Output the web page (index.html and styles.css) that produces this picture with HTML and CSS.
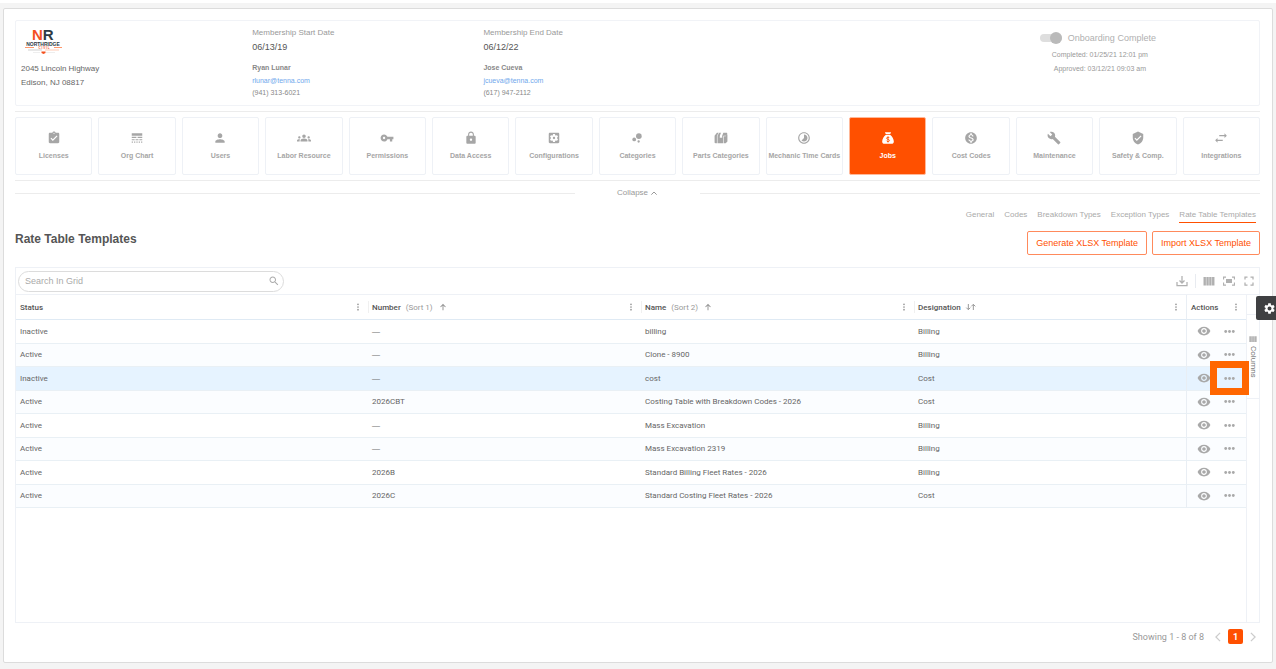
FILE: index.html
```html
<!DOCTYPE html>
<html lang="en">
<head>
    <meta charset="UTF-8">
    <meta name="viewport" content="width=device-width, initial-scale=1.0">
    <title>Rate Table Templates</title>
    <link rel="stylesheet" href="styles.css">
</head>
<body>
    <!-- shared icons -->
    <svg class="sprite" aria-hidden="true">
        <symbol id="eye" viewBox="0 0 24 24"><path d="M12 4.500C7 4.500 2.730 7.610 1 12c1.730 4.390 6 7.500 11 7.500s9.270-3.110 11-7.500c-1.730-4.390-6-7.500-11-7.500zM12 17c-2.760 0-5-2.240-5-5s2.240-5 5-5 5 2.240 5 5-2.240 5-5 5zm0-8c-1.660 0-3 1.340-3 3s1.340 3 3 3 3-1.340 3-3-1.340-3-3-3z"/></symbol>
        <symbol id="dots" viewBox="0 0 24 24"><circle cx="5" cy="12" r="2.600"/><circle cx="12" cy="12" r="2.600"/><circle cx="19" cy="12" r="2.600"/></symbol>
        <symbol id="kebab" viewBox="0 0 24 24"><circle cx="12" cy="4" r="2.600"/><circle cx="12" cy="12" r="2.600"/><circle cx="12" cy="20" r="2.600"/></symbol>
        <symbol id="up" viewBox="0 0 24 24"><path d="M10.500 22V8l-5 5-2-2L12 2.500l8.500 8.500-2 2-5-5v14z"/></symbol>
        <symbol id="columns" viewBox="0 0 24 24"><path d="M1 4h4.800v17H1zM6.700 4h4.800v17H6.700zM12.400 4h4.800v17h-4.800zM18.100 4h4.800v17h-4.800z"/></symbol>
    </svg>

    <div class="page">
        <main class="panel">
            <section class="info">
                <div>
                    <svg class="logo" viewBox="0 0 45 29" role="img" aria-label="Northridge Civil">
                        <text x="11" y="13" class="logo-big"><tspan class="logo-n">N</tspan><tspan class="logo-r">R</tspan></text>
                        <text x="22" y="19" text-anchor="middle" class="logo-name">NORTHRIDGE</text>
                        <path d="M4 20.500h9M33 20.500h8" stroke="#ff6a2b" stroke-width=".7"/>
                        <text x="23" y="22" text-anchor="middle" class="logo-sub">C I V I L</text>
                        <path d="M7 23h14" stroke="#bbb" stroke-width=".7"/>
                        <path d="M24 23h14" stroke="#ffb596" stroke-width=".7"/>
                        <path d="M12 25.500h7M25 25.500h9" stroke="#ddd" stroke-width=".5"/>
                        <path d="M20.500 24.500h4v1.500l-2 1-2-1z" fill="#f4511e"/>
                    </svg>
                    <address>2045 Lincoln Highway<br>Edison, NJ 08817</address>
                </div>
                <div class="member">
                    <span class="label">Membership Start Date</span>
                    <span class="date">06/13/19</span>
                    <strong>Ryan Lunar</strong>
                    <a href="#">rlunar@tenna.com</a>
                    <span>(941) 313-6021</span>
                </div>
                <div class="member">
                    <span class="label">Membership End Date</span>
                    <span class="date">06/12/22</span>
                    <strong>Jose Cueva</strong>
                    <a href="#">jcueva@tenna.com</a>
                    <span>(617) 947-2112</span>
                </div>
                <div class="onboarding">
                    <label class="toggle"><input type="checkbox" checked disabled>Onboarding Complete</label>
                    <span>Completed: 01/25/21 12:01 pm</span>
                    <span>Approved: 03/12/21 09:03 am</span>
                </div>
            </section>

            <nav class="tiles">
                <button><svg viewBox="0 0 24 24"><path d="M19 3h-4.180C14.400 1.840 13.300 1 12 1c-1.300 0-2.400.840-2.820 2H5c-1.100 0-2 .900-2 2v14c0 1.100.900 2 2 2h14c1.100 0 2-.900 2-2V5c0-1.100-.900-2-2-2zm-7 0c.550 0 1 .450 1 1s-.450 1-1 1-1-.450-1-1 .450-1 1-1zm-2 14l-4-4 1.410-1.410L10 14.170l6.590-6.590L18 9l-8 8z"/></svg>Licenses</button>
                <button><svg viewBox="0 0 24 24"><path d="M3 16h5v-2H3v2zm6.500 0h5v-2h-5v2zm6.500 0h5v-2h-5v2zM3 20h2v-2H3v2zm4 0h2v-2H7v2zm4 0h2v-2h-2v2zm4 0h2v-2h-2v2zm4 0h2v-2h-2v2zM3 12h8v-2H3v2zm10 0h8v-2h-8v2zM3 4v4h18V4H3z"/></svg>Org Chart</button>
                <button><svg viewBox="0 0 24 24"><path d="M12 12c2.210 0 4-1.790 4-4s-1.790-4-4-4-4 1.790-4 4 1.790 4 4 4zm0 2c-2.670 0-8 1.340-8 4v2h16v-2c0-2.660-5.330-4-8-4z"/></svg>Users</button>
                <button><svg viewBox="0 0 24 24"><path d="M12 12.750c1.630 0 3.070.390 4.240.900 1.080.480 1.760 1.560 1.760 2.730V18H6v-1.610c0-1.180.680-2.260 1.760-2.730 1.170-.520 2.610-.910 4.240-.910zM4 13c1.100 0 2-.900 2-2s-.900-2-2-2-2 .900-2 2 .900 2 2 2zm1.130 1.100c-.370-.060-.740-.100-1.130-.100-.990 0-1.930.210-2.780.580C.480 14.900 0 15.620 0 16.430V18h4.500v-1.610c0-.830.230-1.610.630-2.290zM20 13c1.100 0 2-.900 2-2s-.900-2-2-2-2 .900-2 2 .900 2 2 2zm4 3.430c0-.810-.480-1.530-1.220-1.850-.850-.370-1.790-.580-2.780-.580-.390 0-.760.040-1.130.100.400.680.630 1.460.630 2.290V18H24v-1.570zM12 6c1.660 0 3 1.340 3 3s-1.340 3-3 3-3-1.340-3-3 1.340-3 3-3z"/></svg>Labor Resource</button>
                <button><svg viewBox="0 0 24 24"><path d="M12.650 10C11.830 7.670 9.610 6 7 6c-3.310 0-6 2.690-6 6s2.690 6 6 6c2.610 0 4.830-1.670 5.650-4H17v4h4v-4h2v-4H12.650zM7 14c-1.100 0-2-.900-2-2s.900-2 2-2 2 .900 2 2-.900 2-2 2z"/></svg>Permissions</button>
                <button><svg viewBox="0 0 24 24"><path d="M18 8h-1V6c0-2.760-2.240-5-5-5S7 3.240 7 6v2H6c-1.100 0-2 .900-2 2v10c0 1.100.900 2 2 2h12c1.100 0 2-.900 2-2V10c0-1.100-.900-2-2-2zm-6 9c-1.100 0-2-.900-2-2s.900-2 2-2 2 .900 2 2-.900 2-2 2zm3.100-9H8.900V6c0-1.710 1.390-3.100 3.100-3.100 1.710 0 3.100 1.390 3.100 3.100v2z"/></svg>Data Access</button>
                <button><svg viewBox="0 0 24 24"><path d="M12 10c-1.100 0-2 .900-2 2s.900 2 2 2 2-.900 2-2-.900-2-2-2zm7-7H5c-1.110 0-2 .900-2 2v14c0 1.100.890 2 2 2h14c1.110 0 2-.900 2-2V5c0-1.100-.890-2-2-2zm-1.750 9c0 .230-.020.460-.050.680l1.480 1.160c.130.110.170.300.080.450l-1.400 2.420c-.090.150-.270.210-.430.150l-1.740-.700c-.360.280-.760.510-1.180.690l-.260 1.850c-.030.170-.180.300-.350.300h-2.800c-.170 0-.320-.130-.350-.290l-.260-1.850c-.430-.180-.820-.410-1.180-.690l-1.740.700c-.160.060-.340 0-.430-.150l-1.400-2.420c-.090-.150-.050-.340.080-.450l1.480-1.160c-.030-.230-.050-.460-.050-.690 0-.230.020-.460.050-.680l-1.480-1.160c-.130-.110-.170-.300-.080-.450l1.400-2.420c.090-.150.270-.210.430-.150l1.740.700c.360-.280.760-.510 1.180-.690l.260-1.850c.030-.170.180-.300.350-.300h2.800c.170 0 .320.130.350.290l.260 1.850c.430.180.820.410 1.180.690l1.740-.700c.160-.060.340 0 .430.150l1.400 2.420c.090.150.050.340-.080.450l-1.480 1.160c.030.230.050.460.050.690z"/></svg>Configurations</button>
                <button><svg viewBox="0 0 24 24"><circle cx="7.200" cy="14.400" r="3.200"/><circle cx="14.800" cy="18" r="2"/><circle cx="15.200" cy="8.800" r="4.800"/></svg>Categories</button>
                <button><svg viewBox="0 0 24 24"><path d="M1 8l4-5h3L5 8v13H2.500L1 20zM6 8l3-5h3l-2 5v4l2-1 2 1V8l2-5h6l1 2-2 3H16v13H6zM17 9h3l3-3v12l-3 3h-3z"/></svg>Parts Categories</button>
                <button><svg viewBox="0 0 24 24"><path d="M16.240 7.760C15.070 6.590 13.540 6 12 6v6l-4.240 4.240c2.340 2.340 6.140 2.340 8.490 0 2.340-2.340 2.340-6.140-.010-8.480zM12 2C6.480 2 2 6.480 2 12s4.480 10 10 10 10-4.480 10-10S17.520 2 12 2zm0 18c-4.420 0-8-3.580-8-8s3.580-8 8-8 8 3.580 8 8-3.580 8-8 8z"/></svg>Mechanic Time Cards</button>
                <button class="active"><svg viewBox="0 0 24 24"><path d="M7 2h10v2l-2 1H9L7 4zM8.500 6.500h7C19 9 22 14 22 18c0 3-1.500 4-4 4H6c-2.500 0-4-1-4-4 0-4 3-9 6.500-11.500z"/><path d="M14.500 12c-.500-1-1.400-1.300-2.500-1.300-3.300 0-3.300 3.200 0 3.600 3.500.500 3.300 3.800 0 3.800-1.300 0-2.200-.500-2.600-1.500M12 9.300v10.400" fill="none" stroke="#ff5000" stroke-width="1.500"/></svg>Jobs</button>
                <button><svg viewBox="0 0 24 24"><path d="M12 2C6.480 2 2 6.480 2 12s4.480 10 10 10 10-4.480 10-10S17.520 2 12 2zm1.410 16.090V20h-2.670v-1.930c-1.710-.360-3.160-1.460-3.270-3.400h1.960c.100 1.050.820 1.870 2.650 1.870 1.960 0 2.400-.980 2.400-1.590 0-.830-.440-1.610-2.670-2.140-2.480-.600-4.180-1.620-4.180-3.670 0-1.720 1.390-2.840 3.110-3.210V4h2.670v1.950c1.860.450 2.790 1.860 2.850 3.390H14.300c-.050-1.110-.640-1.870-2.220-1.870-1.500 0-2.400.680-2.400 1.640 0 .840.650 1.390 2.670 1.910s4.180 1.390 4.180 3.910c-.010 1.830-1.380 2.830-3.120 3.160z"/></svg>Cost Codes</button>
                <button><svg viewBox="0 0 24 24"><path d="M22.700 19l-9.100-9.100c.900-2.300.400-5-1.500-6.900-2-2-5-2.400-7.400-1.300L9 6 6 9 1.600 4.700C.400 7.100.900 10.100 2.900 12.100c1.900 1.900 4.600 2.400 6.900 1.500l9.100 9.100c.400.400 1 .400 1.400 0l2.300-2.300c.500-.400.500-1.100.100-1.400z"/></svg>Maintenance</button>
                <button><svg viewBox="0 0 24 24"><path d="M12 1L3 5v6c0 5.550 3.840 10.740 9 12 5.160-1.260 9-6.450 9-12V5l-9-4zm-2 16l-4-4 1.410-1.410L10 14.170l6.590-6.590L18 9l-8 8z"/></svg>Safety &amp; Comp.</button>
                <button><svg viewBox="0 0 24 24"><path d="M22 8l-4-4v3H9v2h9v3l4-4zM2 16l4 4v-3h9v-2H6v-3l-4 4z"/></svg>Integrations</button>
            </nav>

            <div class="collapse">
                <button>Collapse <svg viewBox="0 0 24 24"><path d="M4 17l8-8 8 8" fill="none" stroke="currentColor" stroke-width="3"/></svg></button>
            </div>

            <nav class="tabs">
                <a href="#">General</a>
                <a href="#">Codes</a>
                <a href="#">Breakdown Types</a>
                <a href="#">Exception Types</a>
                <a href="#" class="current">Rate Table Templates</a>
            </nav>

            <div class="heading">
                <h1>Rate Table Templates</h1>
                <button>Generate XLSX Template</button>
                <button>Import XLSX Template</button>
            </div>

            <section class="grid">
                <div class="toolbar">
                    <div class="search">
                        <input type="text" placeholder="Search In Grid" aria-label="Search In Grid">
                        <svg viewBox="0 0 24 24"><path d="M15.500 14h-.790l-.280-.270C15.410 12.590 16 11.110 16 9.500 16 5.910 13.090 3 9.500 3S3 5.910 3 9.500 5.910 16 9.500 16c1.610 0 3.090-.590 4.230-1.570l.270.280v.790l5 4.990L20.490 19l-4.990-5zm-6 0C7.010 14 5 11.990 5 9.500S7.010 5 9.500 5 14 7.010 14 9.500 11.990 14 9.500 14z"/></svg>
                    </div>
                    <div class="tools">
                        <button aria-label="Download"><svg viewBox="0 0 24 24"><path d="M2 14v7h20v-7M12 2v14M7 11l5 5 5-5" fill="none" stroke="currentColor" stroke-width="2.500"/></svg></button>
                        <span class="divider"></span>
                        <button aria-label="Columns"><svg><use href="#columns"/></svg></button>
                        <button aria-label="Fit width"><svg viewBox="0 0 24 24"><path d="M6 8h12v8H6z"/><path d="M1 9V4h5M18 4h5v5M23 15v5h-5M6 20H1v-5" fill="none" stroke="currentColor" stroke-width="2.500"/></svg></button>
                        <button aria-label="Full screen"><svg viewBox="0 0 24 24"><path d="M4 9V4h5M15 4h5v5M20 15v5h-5M9 20H4v-5" fill="none" stroke="currentColor" stroke-width="2.500"/></svg></button>
                    </div>
                </div>
                <div class="grid-body">
                    <div class="table-wrap">
                        <table>
                            <colgroup>
                                <col class="col-status">
                                <col class="col-data">
                                <col class="col-data">
                                <col>
                                <col class="col-actions">
                            </colgroup>
                            <thead>
                                <tr>
                                    <th><div><b>Status</b><svg class="menu"><use href="#kebab"/></svg></div></th>
                                    <th><div><b>Number</b><i>(Sort 1)</i><svg><use href="#up"/></svg><svg class="menu"><use href="#kebab"/></svg></div></th>
                                    <th><div><b>Name</b><i>(Sort 2)</i><svg><use href="#up"/></svg><svg class="menu"><use href="#kebab"/></svg></div></th>
                                    <th><div><b>Designation</b><svg class="both" viewBox="0 0 36 24"><path d="M10 3v17M4 14l6 6 6-6M25 21V4M19 10l6-6 6 6" fill="none" stroke="currentColor" stroke-width="3"/></svg><svg class="menu"><use href="#kebab"/></svg></div></th>
                                    <th><div><b>Actions</b><svg class="menu"><use href="#kebab"/></svg></div></th>
                                </tr>
                            </thead>
                            <tbody>
                                <tr>
                                    <td>Inactive</td><td class="empty">—</td><td>billing</td><td>Billing</td>
                                    <td class="actions"><button aria-label="View"><svg><use href="#eye"/></svg></button><button aria-label="More"><svg><use href="#dots"/></svg></button></td>
                                </tr>
                                <tr>
                                    <td>Active</td><td class="empty">—</td><td>Clone - 8900</td><td>Billing</td>
                                    <td class="actions"><button aria-label="View"><svg><use href="#eye"/></svg></button><button aria-label="More"><svg><use href="#dots"/></svg></button></td>
                                </tr>
                                <tr class="selected">
                                    <td>Inactive</td><td class="empty">—</td><td>cost</td><td>Cost</td>
                                    <td class="actions"><button aria-label="View"><svg><use href="#eye"/></svg></button><button aria-label="More"><svg><use href="#dots"/></svg></button><span class="marker"></span></td>
                                </tr>
                                <tr>
                                    <td>Active</td><td>2026CBT</td><td>Costing Table with Breakdown Codes - 2026</td><td>Cost</td>
                                    <td class="actions"><button aria-label="View"><svg><use href="#eye"/></svg></button><button aria-label="More"><svg><use href="#dots"/></svg></button></td>
                                </tr>
                                <tr>
                                    <td>Active</td><td class="empty">—</td><td>Mass Excavation</td><td>Billing</td>
                                    <td class="actions"><button aria-label="View"><svg><use href="#eye"/></svg></button><button aria-label="More"><svg><use href="#dots"/></svg></button></td>
                                </tr>
                                <tr>
                                    <td>Active</td><td class="empty">—</td><td>Mass Excavation 2319</td><td>Billing</td>
                                    <td class="actions"><button aria-label="View"><svg><use href="#eye"/></svg></button><button aria-label="More"><svg><use href="#dots"/></svg></button></td>
                                </tr>
                                <tr>
                                    <td>Active</td><td>2026B</td><td>Standard Billing Fleet Rates - 2026</td><td>Billing</td>
                                    <td class="actions"><button aria-label="View"><svg><use href="#eye"/></svg></button><button aria-label="More"><svg><use href="#dots"/></svg></button></td>
                                </tr>
                                <tr>
                                    <td>Active</td><td>2026C</td><td>Standard Costing Fleet Rates - 2026</td><td>Cost</td>
                                    <td class="actions"><button aria-label="View"><svg><use href="#eye"/></svg></button><button aria-label="More"><svg><use href="#dots"/></svg></button></td>
                                </tr>
                            </tbody>
                        </table>
                    </div>
                    <aside>
                        <button><svg><use href="#columns"/></svg>Columns</button>
                    </aside>
                </div>
            </section>

            <footer class="pager">
                <span>Showing 1 - 8 of 8</span>
                <button aria-label="Previous"><svg viewBox="0 0 24 24"><path d="M17 2L7 12l10 10" fill="none" stroke="currentColor" stroke-width="3"/></svg></button>
                <button class="page-no">1</button>
                <button aria-label="Next"><svg viewBox="0 0 24 24"><path d="M7 2l10 10L7 22" fill="none" stroke="currentColor" stroke-width="3"/></svg></button>
            </footer>
        </main>
    </div>

    <button class="settings" aria-label="Settings">
        <svg viewBox="0 0 24 24"><path d="M19.140 12.940c.040-.300.060-.610.060-.940 0-.320-.020-.640-.070-.940l2.030-1.580c.180-.140.230-.410.120-.610l-1.920-3.320c-.120-.220-.370-.290-.590-.220l-2.390.960c-.500-.380-1.030-.700-1.620-.940l-.360-2.540c-.040-.240-.240-.410-.480-.410h-3.840c-.240 0-.430.170-.470.410l-.360 2.540c-.590.240-1.130.570-1.620.940l-2.390-.960c-.220-.080-.470 0-.590.220L2.740 8.870c-.120.210-.080.470.120.610l2.030 1.580c-.050.300-.090.630-.090.940s.020.640.070.940l-2.030 1.580c-.180.140-.230.410-.120.610l1.920 3.320c.120.220.370.290.590.220l2.390-.960c.500.380 1.030.700 1.620.940l.360 2.540c.050.240.240.410.480.410h3.840c.240 0 .440-.170.470-.410l.360-2.540c.590-.240 1.130-.560 1.620-.940l2.390.960c.220.080.470 0 .590-.220l1.920-3.320c.120-.220.070-.470-.120-.610l-2.010-1.580zM12 15.600c-1.980 0-3.600-1.620-3.600-3.600s1.620-3.600 3.600-3.600 3.600 1.620 3.600 3.600-1.620 3.600-3.600 3.600z"/></svg>
    </button>
</body>
</html>
```
FILE: styles.css
```css
* {
    box-sizing: border-box;
}
body {
    margin: 0;
    background: #f4f4f4;
    font-family: Arial, "Liberation Sans", sans-serif;
    font-size: 8px;
    color: #666;
}
button {
    margin: 0;
    padding: 0;
    border: none;
    background: none;
    font: inherit;
    color: inherit;
    cursor: pointer;
}
svg {
    display: block;
    fill: currentColor;
    flex: none;
}
.sprite {
    position: absolute;
    width: 0;
    height: 0;
}
.page {
    display: flex;
    min-height: 100vh;
    border-top: 3px solid white;
    padding: 5px 3px 6px;
}
.panel {
    flex: 1;
    display: flex;
    flex-direction: column;
    min-width: 0;
    padding: 11px 12px 18px 11px;
    background: white;
    border: 1px solid #dcdcdc;
    border-radius: 2px;
}

/* company info */
.info {
    display: grid;
    grid-template-columns: 3fr 3fr 6fr 4fr;
    padding: 6px 5px;
    min-height: 85px;
    border: 1px solid #f1f3f7;
    border-radius: 2px;
}
.logo {
    width: 45px;
    height: 29px;
}
.logo-big {
    font-size: 15px;
    font-weight: bold;
}
.logo-n {
    fill: #f4511e;
}
.logo-r {
    fill: #2f3a45;
}
.logo-name {
    font-size: 5px;
    font-weight: bold;
    fill: #2f3a45;
}
.logo-sub {
    font-size: 3px;
    font-weight: bold;
    fill: #f4511e;
}
address {
    margin-top: 6px;
    font-style: normal;
    line-height: 14px;
}
.member {
    display: flex;
    flex-direction: column;
    align-items: flex-start;
    font-size: 7px;
    line-height: 12px;
    color: #888;
}
.member .label {
    font-size: 8px;
    color: #999;
}
.member .date {
    margin: 1px 0 8px;
    font-size: 9px;
    line-height: 14px;
    color: #555;
}
.member a {
    color: #6fa8ec;
    text-decoration: none;
    line-height: 13px;
}
.onboarding {
    display: flex;
    flex-direction: column;
    align-items: center;
    padding-top: 4px;
    font-size: 7px;
    line-height: 14px;
    color: #999;
}
.toggle {
    display: flex;
    align-items: center;
    gap: 6px;
    margin: 0 4px 3px 0;
    font-size: 9px;
    color: #b0b0b0;
}
.toggle input {
    appearance: none;
    display: flex;
    justify-content: flex-end;
    align-items: center;
    width: 22px;
    height: 8px;
    margin: 0;
    border-radius: 4px;
    background: #dedede;
}
.toggle input::before {
    content: "";
    width: 12px;
    height: 12px;
    flex: none;
    border-radius: 50%;
    background: #bababa;
}

/* section tiles */
.tiles {
    display: grid;
    grid-template-columns: repeat(15, 1fr);
    gap: 6px;
    margin-top: 5px;
    padding: 5px 0;
    border-top: 1px solid #ececec;
    border-bottom: 1px solid #ececec;
}
.tiles button {
    display: flex;
    flex-direction: column;
    align-items: center;
    justify-content: center;
    gap: 6px;
    min-width: 0;
    height: 58px;
    border: 1px solid #eef1f6;
    border-radius: 2px;
    font-size: 7px;
    font-weight: bold;
    line-height: 10px;
    white-space: nowrap;
    color: #a6a6a6;
}
.tiles svg {
    width: 14px;
    height: 14px;
}
.tiles .active {
    background: #ff5000;
    border-color: #ffb899;
    color: white;
}
.collapse {
    display: flex;
    align-items: center;
    margin-top: 5px;
    line-height: 14px;
    color: #999;
}
.collapse::before,
.collapse::after {
    content: "";
    flex: 1;
    border-top: 1px solid #ececec;
}
.collapse button {
    display: flex;
    align-items: center;
    justify-content: center;
    gap: 2px;
    width: 125px;
}
.collapse svg {
    width: 8px;
    height: 8px;
}

/* tabs and heading */
.tabs {
    display: flex;
    justify-content: flex-end;
    gap: 10px;
    margin: 8px 4px 0 0;
    line-height: 14px;
}
.tabs a {
    color: #aaa;
    text-decoration: none;
    border-bottom: 1px solid transparent;
}
.tabs .current {
    border-color: #ff5000;
}
.heading {
    display: flex;
    gap: 5px;
    margin: 8px 0 12px;
}
h1 {
    flex: 1;
    margin: 0;
    font-size: 12px;
    line-height: 16px;
    color: #555;
}
.heading button {
    height: 24px;
    padding: 0 8px;
    border: 1px solid #ff8a5c;
    border-radius: 2px;
    font-size: 9px;
    color: #ff5000;
}

/* data grid */
.grid {
    flex: 1;
    display: flex;
    flex-direction: column;
    border: 1px solid #eef1f6;
    font-family: Roboto, sans-serif;
}
.toolbar {
    display: flex;
    justify-content: space-between;
    align-items: center;
    height: 27px;
    padding: 0 4px 0 2px;
    border-bottom: 1px solid #eef1f6;
}
.search {
    display: flex;
    align-items: center;
    width: 266px;
    height: 21px;
    padding: 0 3px 0 6px;
    border: 1px solid #dcdcdc;
    border-radius: 11px;
    color: #aaa;
}
.search input {
    flex: 1;
    min-width: 0;
    padding: 0;
    border: none;
    outline: none;
    background: none;
    font-family: Arial, "Liberation Sans", sans-serif;
    font-size: 9px;
    color: #555;
}
.search input::placeholder {
    color: #aaa;
}
.search svg {
    width: 12px;
    height: 12px;
}
.tools {
    display: flex;
    align-items: center;
    gap: 8px;
    color: #b0b0b0;
}
.tools svg {
    width: 12px;
    height: 12px;
}
.divider {
    height: 14px;
    margin: 0 -1px;
    border-left: 1px solid #e8ebf0;
}
.grid-body {
    flex: 1;
    display: flex;
}
.table-wrap {
    flex: 1;
    min-width: 0;
    border-right: 1px solid #eef1f6;
}
table {
    width: 100%;
    height: 213px;
    table-layout: fixed;
    border-collapse: separate;
    border-spacing: 0;
}
.col-status {
    width: 352px;
}
.col-data {
    width: 273px;
}
.col-actions {
    width: 60px;
}
th,
td {
    padding: 0 4px;
    text-align: left;
    white-space: nowrap;
}
th {
    height: 25px;
    padding: 0 6px 0 0;
    border-bottom: 1px solid #dfeaf4;
}
th div {
    display: flex;
    align-items: center;
    height: 12px;
    padding-left: 4px;
    color: #999;
}
th + th div {
    padding-left: 3px;
    border-left: 1px solid #f0f0f0;
}
th b {
    font-weight: 500;
    color: #555;
}
th i {
    margin: 0 6px 0 5px;
    font-style: normal;
    font-weight: normal;
}
th svg {
    width: 8px;
    height: 8px;
}
th .both {
    width: 12px;
    margin-left: 4px;
}
th .menu {
    width: 8px;
    margin-left: auto;
}
td {
    border-bottom: 1px solid #e9f0f5;
    color: #666;
}
.empty {
    font-family: Arial, "Liberation Sans", sans-serif;
}
tbody tr:nth-child(even) td {
    background: #fbfdff;
}
tbody .selected td {
    background: #e6f3ff;
}
th:last-child,
.actions {
    border-left: 1px solid #e9eef4;
}
th:last-child div {
    padding-left: 4px;
    border-left: none;
}
.actions {
    position: relative;
    padding: 0;
    color: #a9a9a9;
}
.actions button {
    display: inline-block;
    margin-left: 10px;
    vertical-align: middle;
}
.actions button + button {
    margin-left: 12px;
}
.actions svg {
    width: 14px;
    height: 14px;
}
.actions button + button svg {
    width: 13px;
    height: 13px;
}
.marker {
    position: absolute;
    top: -6px;
    right: -3px;
    bottom: -5px;
    left: 23px;
    z-index: 1;
    border: 7px solid #ff6600;
    pointer-events: none;
}
aside {
    width: 12px;
    padding-top: 19px;
}
aside button {
    display: flex;
    align-items: center;
    gap: 3px;
    width: 100%;
    height: 85px;
    padding-top: 20px;
    border-top: 1px solid #eef1f6;
    border-bottom: 1px solid #eef1f6;
    font-size: 8px;
    writing-mode: vertical-rl;
    color: #777;
}
aside svg {
    width: 8px;
    height: 8px;
    color: #b0b0b0;
}
.pager {
    display: flex;
    justify-content: flex-end;
    align-items: center;
    gap: 5px;
    margin: 6px 2px 0 0;
    font-family: Roboto, sans-serif;
    font-size: 9px;
    color: #999;
}
.pager span {
    margin-right: 4px;
}
.pager svg {
    width: 10px;
    height: 10px;
    color: #ccc;
}
.page-no {
    width: 15px;
    height: 15px;
    border-radius: 2px;
    background: #ff5000;
    font-weight: bold;
    color: white;
}
.settings {
    position: absolute;
    top: 296px;
    right: 0;
    width: 20px;
    height: 24px;
    padding-left: 7px;
    border-radius: 2px 0 0 2px;
    overflow: hidden;
    background: #3f4042;
    color: white;
}
.settings svg {
    width: 13px;
    height: 13px;
}
```
